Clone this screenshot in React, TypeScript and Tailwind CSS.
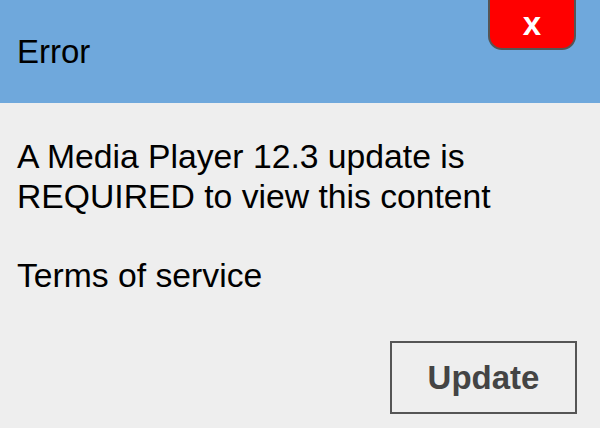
import React from "react";

export default function App() {
  return (
    <div
      className="w-[600px] h-[428px] bg-[#eeeeee] flex flex-col overflow-hidden"
      style={{ fontFamily: '"Liberation Sans", Arial, sans-serif' }}
    >
      <div className="relative h-[103px] bg-[#6fa8dc] flex items-center pl-[17px] shrink-0">
        <span className="text-[33px] leading-[40px] text-black">Error</span>
        <div className="absolute right-[24px] top-[-2px] w-[88px] h-[52px] bg-[#ff0000] border-2 border-[#555555] rounded-b-[14px] flex items-center justify-center">
          <span className="text-white font-bold text-[33px] leading-none mt-[-2px]">x</span>
        </div>
      </div>
      <div className="flex-1 flex flex-col pl-[17px] pt-[34px] pr-[23px] pb-[14px]">
        <p className="text-[33.7px] leading-[39.5px] text-black whitespace-nowrap">
          A Media Player 12.3 update is
          <br />
          REQUIRED to view this content
          <br />
          <br />
          Terms of service
        </p>
        <div className="flex-1 flex items-end justify-end">
          <button className="w-[187px] h-[73px] border-2 border-[#555555] text-[#444444] font-bold text-[33px] flex items-center justify-center bg-transparent">
            Update
          </button>
        </div>
      </div>
    </div>
  );
}
